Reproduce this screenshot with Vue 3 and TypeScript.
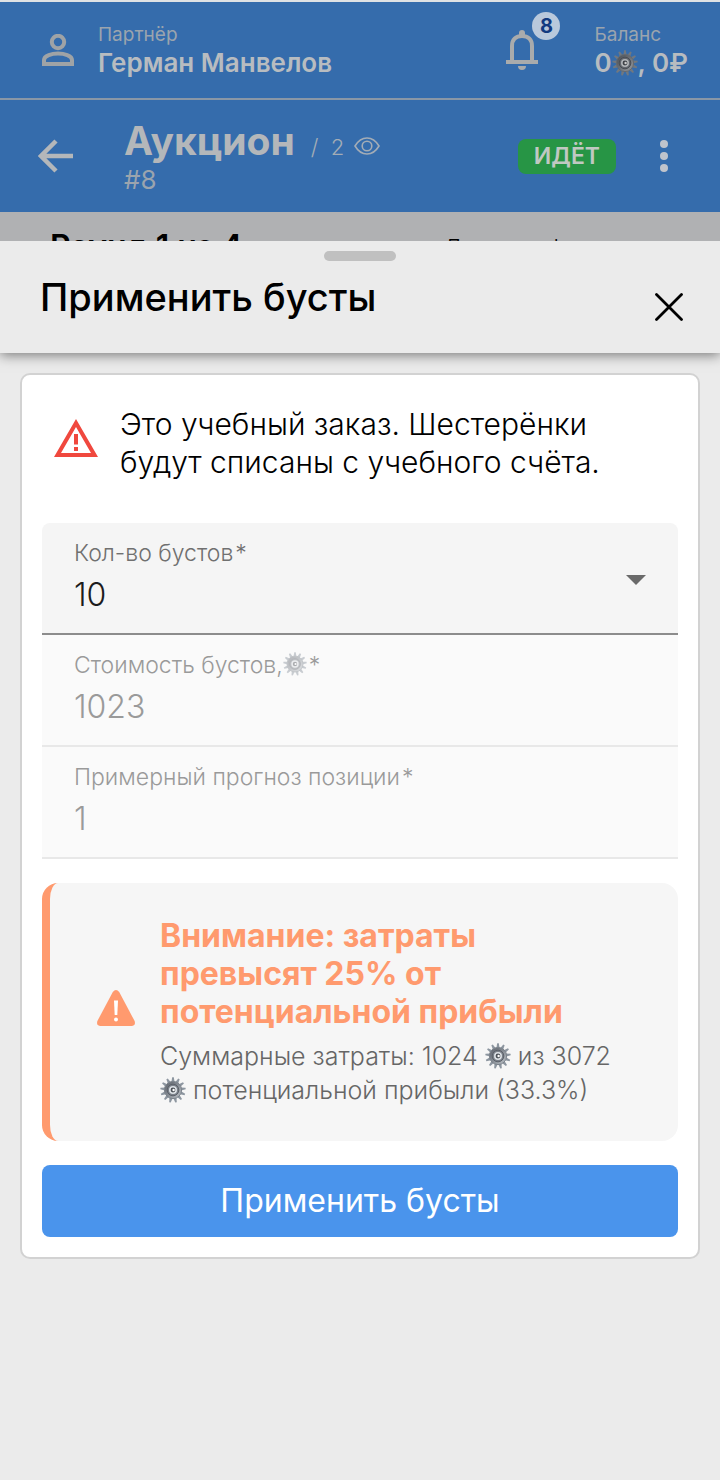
<script setup lang="ts">
import { ref } from 'vue'

const boostCount = ref('10')
const boostOptions = ['1', '5', '10']
const boostCost = ref('1023')
const forecast = ref('1')
const teeth = Array.from({ length: 13 }, (_, i) => (i * 360) / 13)
</script>

<template>
  <div class="page">
    <svg class="sprite" aria-hidden="true">
      <defs>
        <linearGradient id="gear-metal" x1="0" y1="0" x2="1" y2="1">
          <stop offset="0" stop-color="#5a5f68" />
          <stop offset="0.5" stop-color="#868c94" />
          <stop offset="1" stop-color="#c2c7cc" />
        </linearGradient>
      </defs>
      <symbol id="gear" viewBox="0 0 26 26">
        <path
          v-for="angle in teeth"
          :key="angle"
          d="M11.400 5 12.200 0.300h1.600l0.800 4.700z"
          fill="#8d96a0"
          :transform="`rotate(${angle} 13 13)`"
        />
        <circle cx="13" cy="13" r="8.600" fill="url(#gear-metal)" stroke="#7d848c" stroke-width="1" />
        <circle cx="13" cy="13" r="5.800" fill="#7a8089" stroke="#5c6169" stroke-width="1" />
        <circle cx="13" cy="13" r="3.200" fill="#4c5158" stroke="#dde1e5" stroke-width="1.600" />
        <circle cx="13.600" cy="13" r="1.200" fill="#fff" />
      </symbol>
    </svg>

    <header class="topbar">
      <svg class="user-icon" viewBox="0 0 32 32" fill="none" stroke="currentColor" stroke-width="4">
        <circle cx="16" cy="8" r="6.2" />
        <path d="M2 30V26C2 21.500 10 19.600 16 19.600S30 21.500 30 26V30Z" />
      </svg>
      <div class="stack">
        <span class="caption">Партнёр</span>
        <strong class="strong">Герман Манвелов</strong>
      </div>
      <button class="bell" type="button" aria-label="Уведомления">
        <svg viewBox="0 0 32 40">
          <path d="M6 31V16C6 9.500 10 6 16 6S26 9.500 26 16V31" fill="none" stroke="currentColor" stroke-width="4" />
          <path d="M13 6V3a3 3 0 0 1 6 0V6ZM0 30H32V34H0ZM12 36H20A4 4 0 0 1 12 36Z" fill="currentColor" />
        </svg>
        <span class="bell-count">8</span>
      </button>
      <div class="stack balance">
        <span class="caption">Баланс</span>
        <strong class="strong">0<svg class="gear dim"><use href="#gear" /></svg>, 0₽</strong>
      </div>
    </header>

    <nav class="titlebar">
      <button class="icon-button back" type="button" aria-label="Назад">
        <svg viewBox="0 0 36 34" fill="none" stroke="currentColor" stroke-width="4.500">
          <path d="M18 2 3 17 18 32M3 17H35" />
        </svg>
      </button>
      <div class="title-stack">
        <div class="title-line">
          <h1>Аукцион</h1>
          <span class="views">/&nbsp; 2</span>
          <svg class="eye" viewBox="0 0 26 18" fill="none" stroke="currentColor" stroke-width="1.600">
            <path d="M1 9C4 4 8 1 13 1S22 4 25 9C22 14 18 17 13 17S4 14 1 9Z" />
            <circle cx="13" cy="9" r="4.800" />
          </svg>
        </div>
        <span class="number">#8</span>
      </div>
      <span class="status">ИДЁТ</span>
      <button class="icon-button more" type="button" aria-label="Меню">
        <svg viewBox="0 0 8 32" fill="currentColor">
          <circle cx="4" cy="4" r="4" />
          <circle cx="4" cy="16" r="4" />
          <circle cx="4" cy="28" r="4" />
        </svg>
      </button>
    </nav>

    <div class="behind">
      <strong>Раунд 1 из 4</strong>
      <span>До конца фазы</span>
    </div>

    <section class="sheet" role="dialog" aria-labelledby="sheet-title">
      <div class="sheet-head">
        <span class="handle"></span>
        <h2 id="sheet-title">Применить бусты</h2>
        <button class="icon-button close" type="button" aria-label="Закрыть">
          <svg viewBox="0 0 28 28" fill="none" stroke="currentColor" stroke-width="2.800" stroke-linecap="round">
            <path d="M1.500 1.500 26.500 26.500M26.500 1.500 1.500 26.500" />
          </svg>
        </button>
      </div>

      <form class="card" @submit.prevent>
        <div class="notice">
          <svg class="notice-icon" viewBox="0 0 44 38">
            <path d="M22 0 44 38H0ZM22 8 7 34H37Z" fill="#f0483e" fill-rule="evenodd" />
            <path d="M20 15H24V25.500H20ZM20 28H24V32H20Z" fill="#f0483e" />
          </svg>
          <p>Это учебный заказ. Шестерёнки будут списаны с учебного счёта.</p>
        </div>

        <div class="field active">
          <label for="boost-count">Кол-во бустов<span class="star">*</span></label>
          <select id="boost-count" v-model="boostCount">
            <option v-for="option in boostOptions" :key="option" :value="option">{{ option }}</option>
          </select>
          <svg class="arrow" viewBox="0 0 20 10"><path d="M0 0H20L10 10Z" fill="#6a6a6a" /></svg>
        </div>
        <div class="field">
          <label for="boost-cost">Стоимость бустов,<svg class="gear faded"><use href="#gear" /></svg><span class="star">*</span></label>
          <input id="boost-cost" v-model="boostCost" type="text" disabled />
        </div>
        <div class="field">
          <label for="forecast">Примерный прогноз позиции<span class="star">*</span></label>
          <input id="forecast" v-model="forecast" type="text" disabled />
        </div>

        <div class="warning" role="alert">
          <svg class="warning-icon" viewBox="0 0 40 36">
            <path d="M16.800 2Q20 -1.800 23.200 2L38.600 31Q40 35.500 36 36H4Q0 35.500 1.400 31Z" fill="#ff9a6e" />
            <path d="M18 10.500H22L21.300 25H18.700Z" fill="#fff" />
            <circle cx="20" cy="29.500" r="2" fill="#fff" />
          </svg>
          <div>
            <h3>Внимание: затраты превысят 25% от потенциальной прибыли</h3>
            <p>Суммарные затраты: 1024 <svg class="gear"><use href="#gear" /></svg> из 3072 <svg class="gear"><use href="#gear" /></svg> потенциальной прибыли (33.3%)</p>
          </div>
        </div>

        <button class="submit" type="submit">Применить бусты</button>
      </form>
    </section>
  </div>
</template>

<style>
body {
  background: #ebebeb;
}
</style>

<style scoped>
.page {
  display: flex;
  flex-direction: column;
  min-height: 100vh;
  box-sizing: border-box;
  border-top: 2px solid #dfe2e4;
  background: #ebebeb;
  color: #000;
  font-family: Inter, "Liberation Sans", sans-serif;
  font-weight: 300;
}
h1, h2, h3, p {
  margin: 0;
}
button {
  font: inherit;
  border: 0;
  padding: 0;
  background: none;
  cursor: pointer;
}
svg {
  display: block;
}
.sprite {
  position: absolute;
  width: 0;
  height: 0;
}
.gear {
  display: inline-block;
  width: 26px;
  height: 26px;
  vertical-align: -4px;
}
.gear.dim {
  filter: brightness(0.8);
}
.gear.faded {
  width: 24px;
  height: 24px;
  vertical-align: -3px;
  opacity: 0.45;
}
.topbar,
.titlebar {
  display: flex;
  align-items: center;
  background: #356cac;
  color: #b4b7ba;
}
.topbar {
  height: 96px;
  padding: 0 32px 0 42px;
  border-bottom: 2px solid #8a97a6;
}
.user-icon {
  width: 32px;
  height: 32px;
  margin-right: 24px;
  color: #9fa3a6;
}
.stack {
  display: flex;
  flex-direction: column;
  padding-top: 2px;
}
.caption {
  font-size: 19px;
  line-height: 24px;
  font-weight: 400;
  color: #9ba4ae;
}
.strong {
  font-size: 26px;
  line-height: 32px;
  font-weight: 600;
  color: #b8bcc0;
  white-space: nowrap;
}
.bell {
  position: relative;
  margin-left: auto;
  color: #a9abac;
}
.bell svg {
  width: 32px;
  height: 40px;
}
.bell-count {
  position: absolute;
  top: -18px;
  right: -22px;
  width: 28px;
  border-radius: 14px;
  background: #b9c9dc;
  color: #123a80;
  font-size: 20px;
  line-height: 28px;
  font-weight: 700;
  text-align: center;
}
.balance {
  margin-left: 56px;
}
.titlebar {
  height: 112px;
  padding: 0 52px 0 38px;
}
.icon-button svg {
  width: 100%;
}
.back {
  width: 36px;
  margin-right: 50px;
  color: #b4b7ba;
}
.title-stack {
  display: flex;
  flex-direction: column;
  margin-right: auto;
  padding-top: 2px;
}
.title-line {
  display: flex;
  align-items: baseline;
}
h1 {
  font-size: 39px;
  line-height: 46px;
  font-weight: 700;
}
.views {
  margin-left: 16px;
  font-size: 22px;
  line-height: 32px;
  color: #a3acb6;
}
.eye {
  align-self: center;
  width: 26px;
  height: 18px;
  margin: 10px 0 0 10px;
  color: #a3acb6;
}
.number {
  font-size: 26px;
  line-height: 32px;
  font-weight: 400;
  color: #9ba4ae;
}
.status {
  padding: 0 16px;
  border-radius: 8px;
  background: #279545;
  color: #c0c8c2;
  font-size: 23px;
  line-height: 35px;
  font-weight: 600;
}
.more {
  width: 8px;
  margin-left: 44px;
  color: #c0c4cc;
}
.behind {
  display: flex;
  box-sizing: border-box;
  height: 29px;
  padding: 19px 50px 0;
  overflow: hidden;
  background: #b0b1b3;
  line-height: 32px;
  white-space: nowrap;
}
.behind strong {
  width: 394px;
  font-size: 32px;
  font-weight: 600;
}
.behind span {
  font-size: 22px;
}
.sheet {
  flex: 1;
  display: flex;
  flex-direction: column;
  gap: 20px;
  background: #ebebeb;
}
.sheet-head {
  position: relative;
  display: flex;
  align-items: center;
  justify-content: space-between;
  box-sizing: border-box;
  height: 112px;
  padding: 0 37px 0 40px;
  box-shadow: 0 2px 12px rgba(0, 0, 0, 0.5);
  clip-path: inset(0 0 -24px 0);
}
.handle {
  position: absolute;
  top: 10px;
  left: 50%;
  width: 72px;
  height: 10px;
  margin-left: -36px;
  border-radius: 5px;
  background: #c0c0c0;
}
h2 {
  font-size: 38px;
  line-height: 48px;
  font-weight: 500;
}
.close {
  width: 28px;
  margin-top: 20px;
  color: #000;
}
.card {
  display: flex;
  flex-direction: column;
  margin: 0 20px;
  padding: 20px;
  border: 2px solid #d2d2d2;
  border-radius: 10px;
  background: #fff;
}
.notice {
  display: flex;
  align-items: flex-start;
  gap: 22px;
  padding: 10px 12px 42px;
}
.notice-icon {
  flex: none;
  width: 44px;
  height: 38px;
  margin-top: 14px;
}
.notice p {
  font-size: 30px;
  line-height: 38px;
}
.field {
  position: relative;
  display: flex;
  flex-direction: column;
  box-sizing: border-box;
  height: 112px;
  padding: 14px 32px 0;
  border-bottom: 2px solid #e8e8e8;
  background: #fafafa;
  color: #9a9a9a;
}
.field.active {
  border-bottom-color: #8c8c8c;
  border-radius: 8px 8px 0 0;
  background: #f5f5f5;
  color: #707070;
}
label {
  font-size: 23px;
  line-height: 32px;
}
.star {
  margin-left: 2px;
}
select,
input {
  appearance: none;
  width: 100%;
  height: 52px;
  padding: 0;
  border: 0;
  outline: 0;
  background: none;
  color: #9a9a9a;
  font: inherit;
  font-size: 32px;
  line-height: 52px;
}
select {
  color: #1c1c1c;
}
.arrow {
  position: absolute;
  right: 32px;
  top: 52px;
  width: 20px;
  height: 10px;
  pointer-events: none;
}
.warning {
  display: flex;
  align-items: center;
  gap: 24px;
  margin: 24px 0;
  padding: 34px 46px 34px 46px;
  border-left: 8px solid #ff9a6e;
  border-radius: 16px;
  background: #f6f6f6;
}
.warning-icon {
  flex: none;
  width: 40px;
  height: 36px;
  margin-bottom: 8px;
}
h3 {
  font-size: 32px;
  line-height: 38px;
  font-weight: 700;
  color: #ff9a6e;
}
.warning p {
  margin-top: 8px;
  font-size: 25px;
  line-height: 34px;
  color: #666;
}
.submit {
  border-radius: 8px;
  background: #4a94ec;
  color: #fff;
  font-size: 32px;
  font-weight: 400;
  line-height: 72px;
}
</style>
